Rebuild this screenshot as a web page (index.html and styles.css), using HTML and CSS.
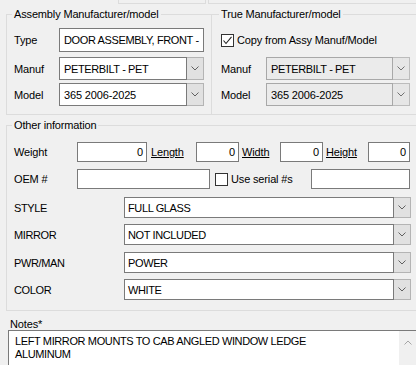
FILE: index.html
```html
<!DOCTYPE html>
<html>
<head>
<meta charset="utf-8">
<link rel="stylesheet" href="styles.css">
</head>
<body>
<div class="page">
  <div class="topstrip"><div class="ts-gap"></div><div class="ts-a"></div><div class="ts-b"></div></div>

  <div class="toprow">
    <fieldset class="grp grp-assy">
      <legend>Assembly Manufacturer/model</legend>
      <div class="frow h24"><span class="lbl">Type</span><div class="tb w145 caps">DOOR ASSEMBLY, FRONT -</div></div>
      <div class="frow h23 mt5"><span class="lbl">Manuf</span>
        <div class="combo w145"><div class="combo-text caps">PETERBILT - PET</div><div class="combo-btn"><svg width="8" height="5" viewBox="0 0 8 5"><polyline points="0.5,0.5 4,4 7.5,0.5" fill="none" stroke="#606060" stroke-width="1"/></svg></div></div>
      </div>
      <div class="frow h23 mt3"><span class="lbl">Model</span>
        <div class="combo w145"><div class="combo-text">365 2006-2025</div><div class="combo-btn"><svg width="8" height="5" viewBox="0 0 8 5"><polyline points="0.5,0.5 4,4 7.5,0.5" fill="none" stroke="#606060" stroke-width="1"/></svg></div></div>
      </div>
    </fieldset>

    <fieldset class="grp grp-true">
      <legend>True Manufacturer/model</legend>
      <div class="frow h24">
        <span class="ck"><svg width="11" height="11" viewBox="0 0 11 11"><polyline points="1.5,5.5 4,8.5 9.5,1.8" fill="none" stroke="#222" stroke-width="1.1"/></svg></span>
        <span class="cklbl">Copy from Assy Manuf/Model</span>
      </div>
      <div class="frow h23 mt5"><span class="lbl">Manuf</span>
        <div class="combo disabled w144"><div class="combo-text caps">PETERBILT - PET</div><div class="combo-btn"><svg width="8" height="5" viewBox="0 0 8 5"><polyline points="0.5,0.5 4,4 7.5,0.5" fill="none" stroke="#707070" stroke-width="1"/></svg></div></div>
      </div>
      <div class="frow h23 mt3"><span class="lbl">Model</span>
        <div class="combo disabled w144"><div class="combo-text">365 2006-2025</div><div class="combo-btn"><svg width="8" height="5" viewBox="0 0 8 5"><polyline points="0.5,0.5 4,4 7.5,0.5" fill="none" stroke="#707070" stroke-width="1"/></svg></div></div>
      </div>
    </fieldset>
  </div>

  <fieldset class="grp grp-other">
    <legend>Other information</legend>
    <div class="frow h20">
      <span class="lbl-o">Weight</span>
      <div class="tb num w70">0</div>
      <span class="link ml4 w45">Length</span>
      <div class="tb num w43">0</div>
      <span class="link ml3 w38">Width</span>
      <div class="tb num w43">0</div>
      <span class="link ml3 w42">Height</span>
      <div class="tb num w42">0</div>
    </div>
    <div class="frow h20 mt7">
      <span class="lbl-o">OEM #</span>
      <div class="tb w133"></div>
      <span class="ck ml5"></span>
      <span class="cklbl w80">Use serial #s</span>
      <div class="tb w99"></div>
    </div>
    <div class="frow h21 mt8">
      <span class="lbl-c caps">STYLE</span>
      <div class="combo w287"><div class="combo-text pl3 caps">FULL GLASS</div><div class="combo-btn"><svg width="8" height="5" viewBox="0 0 8 5"><polyline points="0.5,0.5 4,4 7.5,0.5" fill="none" stroke="#606060" stroke-width="1"/></svg></div></div>
    </div>
    <div class="frow h21 mt6">
      <span class="lbl-c caps">MIRROR</span>
      <div class="combo w287"><div class="combo-text pl3 caps">NOT INCLUDED</div><div class="combo-btn"><svg width="8" height="5" viewBox="0 0 8 5"><polyline points="0.5,0.5 4,4 7.5,0.5" fill="none" stroke="#606060" stroke-width="1"/></svg></div></div>
    </div>
    <div class="frow h21 mt7">
      <span class="lbl-c caps">PWR/MAN</span>
      <div class="combo w287"><div class="combo-text pl3 caps">POWER</div><div class="combo-btn"><svg width="8" height="5" viewBox="0 0 8 5"><polyline points="0.5,0.5 4,4 7.5,0.5" fill="none" stroke="#606060" stroke-width="1"/></svg></div></div>
    </div>
    <div class="frow h21 mt6">
      <span class="lbl-c caps">COLOR</span>
      <div class="combo w287"><div class="combo-text pl3 caps">WHITE</div><div class="combo-btn"><svg width="8" height="5" viewBox="0 0 8 5"><polyline points="0.5,0.5 4,4 7.5,0.5" fill="none" stroke="#606060" stroke-width="1"/></svg></div></div>
    </div>
  </fieldset>

  <div class="notes-label">Notes*</div>
  <div class="notes">
    <div class="notes-text caps">LEFT MIRROR MOUNTS TO CAB ANGLED WINDOW LEDGE<br>ALUMINUM</div>
    <div class="vscroll"><svg width="8" height="5" viewBox="0 0 8 5"><polyline points="0.5,4.5 4,1 7.5,4.5" fill="none" stroke="#a6a6a6" stroke-width="1"/></svg></div>
  </div>
</div>
</body>
</html>
```
FILE: styles.css
```css
* { box-sizing: border-box; }
html, body {
  margin: 0;
  padding: 0;
  width: 416px;
  height: 365px;
  overflow: hidden;
}
body {
  background: #f0f0f0;
  font-family: "Liberation Sans", Arial, sans-serif;
  font-size: 11px;
  letter-spacing: -0.15px;
  color: #000;
}
.caps { letter-spacing: -0.38px; }
.page {
  display: flex;
  flex-direction: column;
  width: 416px;
}

/* remnants of controls above */
.topstrip { display: flex; height: 4px; }
.ts-gap { width: 118px; flex: none; }
.ts-a { width: 88px; flex: none; border: 1px solid #dcdcdc; border-top: 0; }
.ts-b { margin-left: 2px; flex: 1; border-left: 1px solid #dcdcdc; border-bottom: 1px solid #dcdcdc; }

.toprow { display: flex; margin: 3px 0 0 6px; }

.grp {
  margin: 0;
  border: 1px solid #dcdcdc;
  min-width: 0;
  flex: none;
}
.grp legend {
  padding: 0 2px;
  margin-left: -2px;
  height: 15px;
  line-height: 15px;
}
.grp-assy { width: 206px; padding: 6px 7px 8px 7px; }
.grp-true { width: 209px; border-left: 0; padding: 6px 0 8px 9px; }
.grp-other { width: 415px; margin: 3px 0 0 6px; padding: 9px 0 10px 7px; }

.frow { display: flex; align-items: center; }
.h24 { height: 24px; }
.h23 { height: 23px; }
.h21 { height: 21px; }
.h20 { height: 20px; }
.mt3 { margin-top: 3px; }
.mt5 { margin-top: 5px; }
.mt6 { margin-top: 6px; }
.mt7 { margin-top: 7px; }
.mt8 { margin-top: 8px; }
.ml3 { margin-left: 3px; }
.ml4 { margin-left: 4px; }
.ml5 { margin-left: 5px; }

.lbl { width: 45px; flex: none; }
.lbl-o { width: 63px; flex: none; }
.lbl-c { width: 110px; flex: none; }

.w42 { width: 42px; }
.w43 { width: 43px; }
.w45 { width: 45px; }
.w38 { width: 38px; }
.w70 { width: 70px; }
.w80 { width: 80px; }
.w99 { width: 99px; }
.w133 { width: 133px; }
.w144 { width: 144px; }
.w145 { width: 145px; }
.w287 { width: 287px; }

.tb {
  flex: none;
  height: 100%;
  background: #fff;
  border: 1px solid #7a7a7a;
  display: flex;
  align-items: center;
  padding: 0 4px;
  white-space: nowrap;
  overflow: hidden;
}
.tb.num { justify-content: flex-end; padding: 0 3px; }

.link { flex: none; text-decoration: underline; }

.ck {
  flex: none;
  width: 13px;
  height: 13px;
  background: #fff;
  border: 1px solid #333;
  display: flex;
  align-items: center;
  justify-content: center;
}
.cklbl { flex: none; margin-left: 3px; white-space: nowrap; }

.combo { flex: none; display: flex; height: 100%; }
.combo-text {
  flex: 1;
  min-width: 0;
  background: #fff;
  border: 1px solid #7a7a7a;
  display: flex;
  align-items: center;
  padding-left: 4px;
  white-space: nowrap;
  overflow: hidden;
}
.combo-text.pl3 { padding-left: 3px; }
.combo-btn {
  flex: none;
  width: 17px;
  background: #e1e1e1;
  border: 1px solid #b4b4b4;
  border-left: 0;
  display: flex;
  align-items: center;
  justify-content: center;
}
.combo.disabled .combo-text { background: #ebebeb; border-color: #a8a8a8; }
.combo.disabled .combo-btn { background: #e6e6e6; border-color: #bcbcbc; }

.notes-label { margin: 7px 0 0 10px; height: 12px; line-height: 12px; }
.notes {
  margin-left: 8px;
  width: 410px;
  height: 40px;
  display: flex;
  background: #fff;
  border: 1px solid #7a7a7a;
}
.notes-text { flex: 1; padding: 4px 0 0 6px; line-height: 13px; white-space: nowrap; }
.vscroll {
  flex: none;
  width: 17px;
  margin-right: 1px;
  background: #f0f0f0;
  display: flex;
  justify-content: center;
  align-items: flex-start;
  padding-top: 9px;
}
```
